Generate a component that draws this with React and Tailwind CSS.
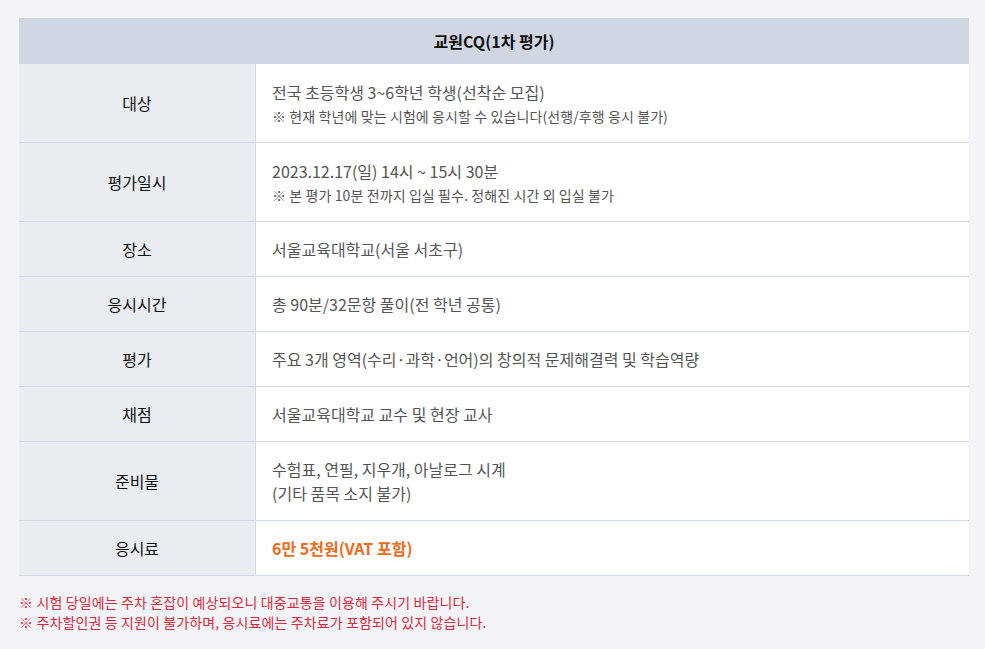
export default function App() {
  const font = { fontFamily: '"Noto Sans CJK KR", "Noto Sans", sans-serif' };
  const rows = [
    { label: "대상", lines: ["전국 초등학생 3~6학년 학생(선착순 모집)"], note: "※ 현재 학년에 맞는 시험에 응시할 수 있습니다(선행/후행 응시 불가)" },
    { label: "평가일시", lines: ["2023.12.17(일) 14시 ~ 15시 30분"], note: "※ 본 평가 10분 전까지 입실 필수. 정해진 시간 외 입실 불가" },
    { label: "장소", lines: ["서울교육대학교(서울 서초구)"] },
    { label: "응시시간", lines: ["총 90분/32문항 풀이(전 학년 공통)"] },
    { label: "평가", lines: ["주요 3개 영역(수리·과학·언어)의 창의적 문제해결력 및 학습역량"] },
    { label: "채점", lines: ["서울교육대학교 교수 및 현장 교사"] },
    { label: "준비물", lines: ["수험표, 연필, 지우개, 아날로그 시계", "(기타 품목 소지 불가)"] },
    { label: "응시료", lines: ["6만 5천원(VAT 포함)"], orange: true },
  ];
  return (
    <div className="min-h-[649px] w-full bg-[#f2f4f7] px-[19px] pt-[18px] pb-4" style={font}>
      <div className="w-[950px]">
        <div className="flex h-[46px] items-center justify-center bg-[#d1d7e2] text-[16px] font-bold text-[#111]">
          교원CQ(1차 평가)
        </div>
        {rows.map((r, i) => {
          const multi = r.note || r.lines.length > 1;
          return (
            <div key={i} className="flex border-b border-[#d3d9e4]">
              <div className="flex w-[237px] shrink-0 items-center justify-center border-r border-[#d3d9e4] bg-[#e9ecf1] text-[16px] font-normal text-[#111]">
                {r.label}
              </div>
              <div className={`flex flex-1 flex-col justify-center bg-white pl-[16px] ${multi ? "min-h-[78px] py-[14px]" : "h-[54px]"}`}>
                {r.lines.map((l, j) => (
                  <div key={j} className={`text-[16px] leading-[24px] ${r.orange ? "font-bold text-[#f26a1b]" : "text-[#555]"}`}>{l}</div>
                ))}
                {r.note && <div className="mt-[2px] text-[14px] leading-[20px] tracking-[0.1px] text-[#555]">{r.note}</div>}
              </div>
            </div>
          );
        })}
        <div className="mt-[16px] text-[14px] leading-[20px] tracking-[0.12px] text-[#e0283a]">
          <div>※ 시험 당일에는 주차 혼잡이 예상되오니 대중교통을 이용해 주시기 바랍니다.</div>
          <div>※ 주차할인권 등 지원이 불가하며, 응시료에는 주차료가 포함되어 있지 않습니다.</div>
        </div>
      </div>
    </div>
  );
}
